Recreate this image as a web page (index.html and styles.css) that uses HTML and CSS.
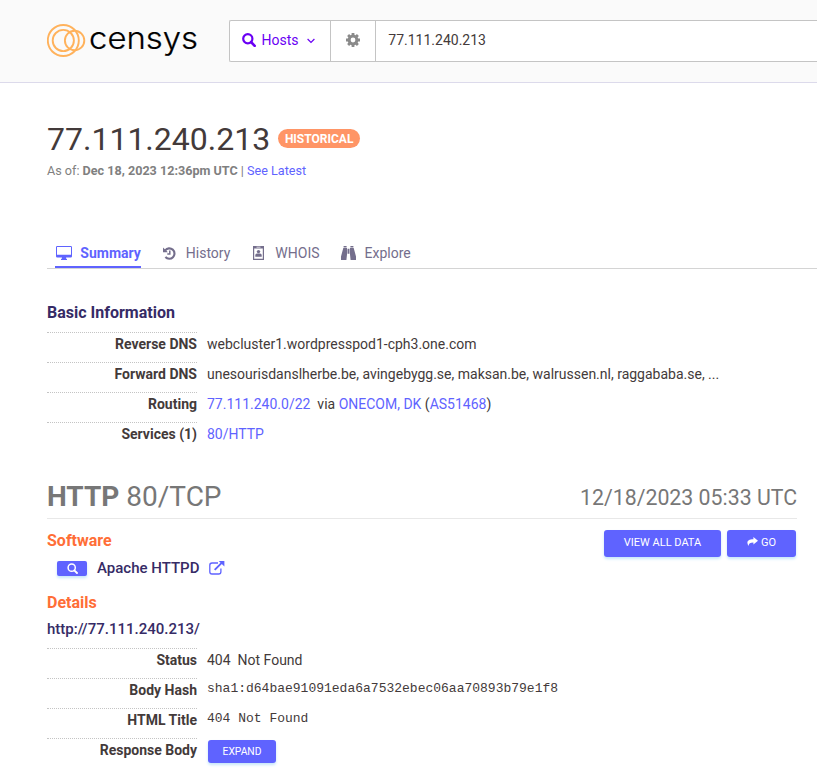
FILE: index.html
```html
<!DOCTYPE html>
<html lang="en">
<head>
<meta charset="utf-8">
<title>77.111.240.213 - Host Summary</title>
<link rel="stylesheet" href="styles.css">
</head>
<body>
<header class="topbar">
  <a class="logo">
    <svg width="160" height="60" viewBox="0 -10 160 60">
      <g fill="none" stroke="#ffb25c" stroke-width="1.9">
        <circle cx="16.3" cy="20.5" r="15.5"/>
        <circle cx="16.3" cy="20.5" r="10.6"/>
        <circle cx="27.6" cy="20.5" r="9.7"/>
      </g>
      <text class="wordmark" x="42" y="28.900" textLength="109" lengthAdjust="spacingAndGlyphs">censys</text>
    </svg>
  </a>
  <div class="search">
    <div class="search-type">
      <svg width="14" height="14" viewBox="0 0 14 14" fill="none" stroke="currentColor"><circle cx="5.8" cy="5.8" r="4.6" stroke-width="2.2"/><path d="M9 9l3.7 3.9" stroke-width="2.6" stroke-linecap="round"/></svg>
      <span>Hosts</span>
      <svg class="chevron" width="8" height="6" viewBox="0 0 8 6" fill="none" stroke="currentColor" stroke-width="1.2"><path d="M.6 1L4 4.4 7.4 1"/></svg>
    </div>
    <div class="search-settings">
      <svg width="14" height="14" viewBox="-7 -7 14 14"><g fill="none" stroke="#8a8a8a"><circle r="3.9" stroke-width="3"/><path d="M0-4.5V-7M0 4.5V7M-4.5 0H-7M4.5 0H7M3.2-3.2L4.9-4.9M-3.2-3.2L-4.9-4.9M3.2 3.2L4.9 4.9M-3.2 3.2L-4.9 4.9" stroke-width="2.8"/></g></svg>
    </div>
    <div class="search-input">77.111.240.213</div>
  </div>
</header>
<main>
  <div class="title"><h1>77.111.240.213</h1><span class="badge">HISTORICAL</span></div>
  <p class="as-of">As of: <b>Dec 18, 2023 12:36pm UTC</b> | <a>See Latest</a></p>
  <nav class="tabs">
    <a class="tab active"><svg width="16" height="14" viewBox="0 0 16 14"><path fill="currentColor" fill-rule="evenodd" d="M1.3 0h13.4Q16 0 16 1.3v8.9q0 1.3-1.3 1.3H10l.4 1.500h.6v1H5v-1h.6l.4-1.500H1.300Q0 11.500 0 10.200V1.300Q0 0 1.300 0zM1 1v7.700h14V1z"/></svg><span>Summary</span></a>
    <a class="tab history"><svg width="13" height="13" viewBox="0 0 13 13" fill="none" stroke="currentColor" stroke-width="2.1"><path d="M2.200 3.300A5.200 5.200 0 1 1 2.400 10"/><path d="M6.800 3.500v3.400H4.300" stroke-width="1.500"/><path d="M0 .5V5.300h4.900z" fill="currentColor" stroke="none"/></svg><span>History</span></a>
    <a class="tab whois"><svg width="11" height="14" viewBox="0 0 11 14" fill="currentColor"><path fill-rule="evenodd" d="M0 0h11v14H0zM1.200 2.400v10.400h8.600V2.400zM3.500.8v.8h4V.8z"/><circle cx="5.500" cy="5.600" r="1.700"/><path d="M2.300 10.800V9q0-1.500 1.700-1.500h3Q8.700 7.500 8.700 9v1.800z"/></svg><span>WHOIS</span></a>
    <a class="tab explore"><svg width="15" height="14" viewBox="0 0 15 14" fill="currentColor"><path d="M2.600 0h3v1.500H2.600zM9.400 0h3v1.500h-3zM2.300 2H6v6.500L5.400 14H0v-3.500zM9 2h3.700L15 10.500V14H9.600L9 8.500zM6.500 2.700h2v5h-2z"/></svg><span>Explore</span></a>
  </nav>

  <h2>Basic Information</h2>
  <dl>
    <dt>Reverse DNS</dt><dd>webcluster1.wordpresspod1-cph3.one.com</dd>
    <dt>Forward DNS</dt><dd>unesourisdanslherbe.be, avingebygg.se, maksan.be, walrussen.nl, raggababa.se, ...</dd>
    <dt>Routing</dt><dd><a>77.111.240.0/22</a>&nbsp; via <a>ONECOM, DK</a> (<a>AS51468</a>)</dd>
    <dt>Services (1)</dt><dd><a>80/HTTP</a></dd>
  </dl>

  <section class="service">
    <div class="service-head"><h3><b>HTTP</b> 80/TCP</h3><time>12/18/2023 05:33 UTC</time></div>
    <div class="service-intro">
      <div>
        <h4>Software</h4>
        <div class="software">
          <a class="btn lookup"><svg width="11" height="11" viewBox="0 0 11 11" fill="none" stroke="#fff"><circle cx="4.700" cy="4.700" r="3.600" stroke-width="1.500"/><path d="M7.300 7.300l2.700 2.700" stroke-width="1.900" stroke-linecap="round"/></svg></a>
          <span>Apache HTTPD</span>
          <svg class="external" width="16" height="14" viewBox="0 0 16 14" fill="none" stroke="#5f63ff"><path d="M9 2H3Q.8 2 .8 4.200v6.600Q.8 13 3 13h6.700q2.200 0 2.200-2.200V7.500" stroke-width="1.300"/><path d="M5.700 8.800l7-7" stroke-width="1.900"/><path d="M9.700 0H15.400V5.500z" fill="#5f63ff" stroke="none"/></svg>
        </div>
      </div>
      <div class="actions">
        <a class="btn view">VIEW ALL DATA</a>
        <a class="btn go"><svg width="11" height="9" viewBox="0 0 11 9"><path fill="#fff" d="M6.400 0L11 3.800 6.400 7.600V5.400C3.300 5.400 1.700 6.200 1.600 9-.9 5.300.4 2.200 6.400 2.200z"/></svg>GO</a>
      </div>
    </div>
    <h4 class="details">Details</h4>
    <div class="url">http://77.111.240.213/</div>
    <dl>
      <dt>Status</dt><dd>404&nbsp; Not Found</dd>
      <dt>Body Hash</dt><dd class="mono">sha1:d64bae91091eda6a7532ebec06aa70893b79e1f8</dd>
      <dt>HTML Title</dt><dd class="mono">404 Not Found</dd>
      <dt>Response Body</dt><dd><a class="btn expand">EXPAND</a></dd>
    </dl>
  </section>
</main>
</body>
</html>
```
FILE: styles.css
```css
* { box-sizing: border-box; }
body { margin: 0; background: #fff; color: #433a3a; font: 14px/20px Roboto, "Liberation Sans", sans-serif; overflow: hidden; }
h1, h2, h3, h4, p, dl, dd { margin: 0; }
a { color: #5f63ff; }
svg { display: block; flex: none; }

.topbar { display: flex; height: 83px; padding: 20px 0 0 47px; background: #fafafa; border-bottom: 1px solid #dcdaeb; }
.logo { width: 182px; flex: none; margin-top: -10px; }
.wordmark { font: 300 31px Inter, "Liberation Sans", sans-serif; fill: #000; stroke: #000; stroke-width: .2px; }
.search { display: flex; flex: 1; height: 42px; background: #fff; border: 1px solid #c4c4c4; border-right: 0; border-radius: 2px 0 0 2px; }
.search-type { display: flex; align-items: center; width: 101px; padding: 0 0 2px 12px; border-right: 1px solid #c4c4c4; color: #6a00f4; }
.search-type span { margin-left: 5.500px; }
.search-type .chevron { margin-left: 8.500px; margin-top: 1px; }
.search-settings { display: flex; align-items: center; justify-content: center; width: 45px; padding-bottom: 2px; border-right: 1px solid #c4c4c4; }
.search-input { padding: 9px 12.300px; }

main { padding: 39px 20px 0 47px; }
.title { display: flex; align-items: center; height: 34px; }
h1 { font-size: 32px; line-height: 34px; font-weight: 400; }
.badge { margin: 0 0 2px 8px; height: 19px; width: 82px; border-radius: 10px; background: #ff9566; color: #fff; font-size: 12px; line-height: 20px; font-weight: 700; text-align: center; }
.as-of { margin-top: 5px; font-size: 12.600px; color: #808080; }
.tabs { display: flex; height: 28px; margin: 60px -20px 0 0; padding-left: 8px; border-bottom: 1px solid #d4d4d4; }
.tab { display: flex; align-items: center; height: 27px; padding-bottom: 3px; color: #746e8c; }
.tab.active { padding-left: 1px; color: #5f63ff; font-weight: 700; border-bottom: 2px solid #5f63ff; padding-bottom: 1px; }
.tab.active span { margin-left: 8.300px; }
.history { margin-left: 22px; }
.history span { margin-left: 10px; }
.whois { margin-left: 23px; }
.whois span { margin-left: 11px; }
.explore { margin-left: 21px; }
.explore span { margin-left: 9px; }

h2 { margin-top: 33px; font-size: 16px; line-height: 22px; color: #362b66; }
dl { display: grid; grid-template-columns: 150px 1fr; grid-auto-rows: 30px; column-gap: 10px; margin-top: 8px; }
dt { border-top: 1px dotted #c4c4c4; padding-top: 1px; font-weight: 700; text-align: right; }
dd { padding-top: 2px; white-space: nowrap; }
.service { margin-top: 30px; }
.service-head { display: flex; justify-content: space-between; height: 37px; border-bottom: 1px solid #e8e8e8; color: #777; }
h3 { font-size: 28px; line-height: 32px; font-weight: 400; margin-top: -1px; }
time { font-size: 21.300px; line-height: 32px; }
.service-intro { display: flex; justify-content: space-between; }
h4 { margin-top: 11px; font-size: 16px; line-height: 22px; color: #ff6e37; }
.btn { display: flex; align-items: center; justify-content: center; border-radius: 3px; background: #5f63ff; color: #fff; font-size: 11px; box-shadow: 0 2px 3px #c7e6fa; }
.software { display: flex; align-items: center; height: 22px; margin: 5px 0 0 10px; font-size: 15px; font-weight: 500; color: #362b66; }
.lookup { width: 30px; height: 15px; margin-top: 1px; margin-right: 10px; border-radius: 2px; }
.external { margin-left: 10px; }
.actions { display: flex; gap: 6px; padding: 11px 1px 0 0; }
.view, .go { height: 27px; padding-bottom: 2px; }
.view { width: 117px; }
.go { width: 69px; gap: 3px; }
.go svg { margin-bottom: 2px; }
.details { margin-top: 13px; }
.url { margin-top: 5px; font-size: 15px; line-height: 20px; font-weight: 500; color: #362b66; }
.service dl { margin-top: 9px; }
.mono { padding-top: 1px; font-family: "Liberation Mono", monospace; font-size: 13px; }
.expand { width: 68px; height: 23px; margin-left: 1px; font-size: 10.300px; }
```
